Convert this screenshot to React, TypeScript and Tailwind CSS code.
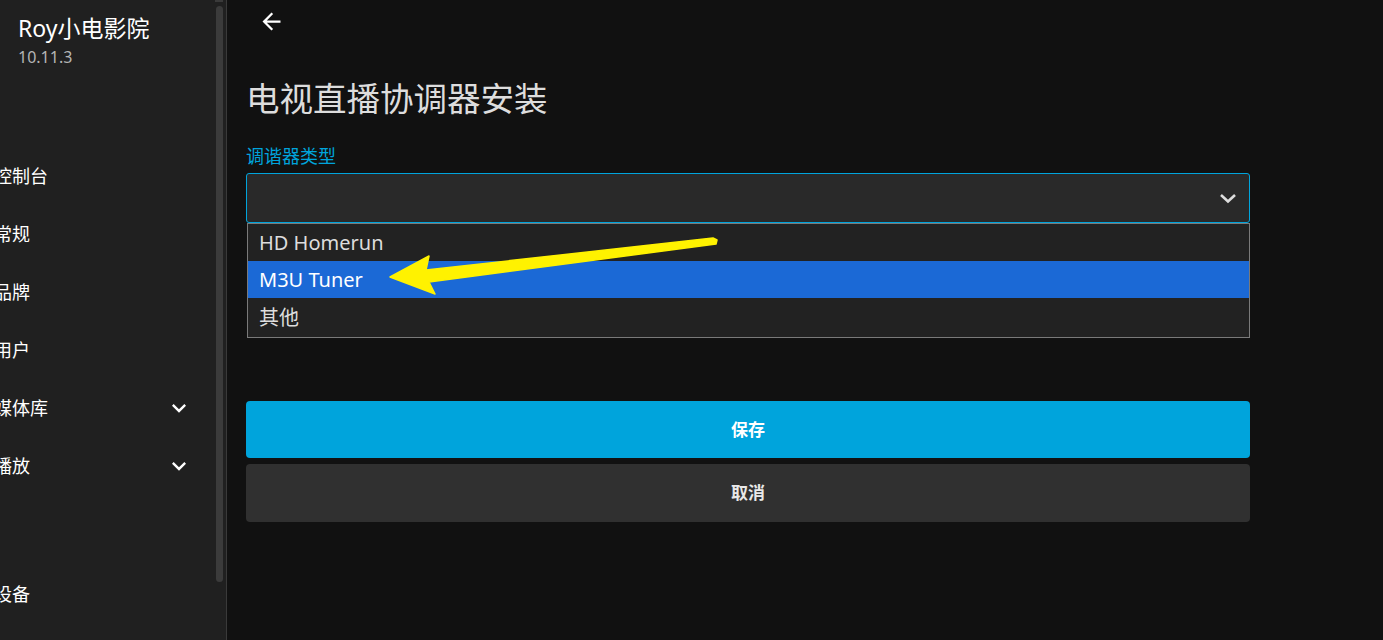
import React from 'react';

const font = { fontFamily: '"Noto Sans", "Noto Sans CJK SC", sans-serif' };

const navItems = [
  { label: '控制台' },
  { label: '常规' },
  { label: '品牌' },
  { label: '用户' },
  { label: '媒体库', chevron: true },
  { label: '播放', chevron: true },
];

function ExpandMore({ className }: { className?: string }) {
  return (
    <svg viewBox="0 0 24 24" className={className} fill="currentColor">
      <path d="M16.59 8.59L12 13.17 7.41 8.59 6 10l6 6 6-6z" />
    </svg>
  );
}

function Sidebar() {
  return (
    <aside className="relative w-[227px] shrink-0 h-[640px] bg-[#202020] border-r border-[#3a3a3a]">
      <div className="pl-[18px] pt-[12px]">
        <div className="text-[23px] leading-[32px] text-white">Roy小电影院</div>
        <div className="text-[16px] leading-[22px] text-[#b5b5b5] mt-[2px]">10.11.3</div>
      </div>
      <nav className="mt-[79px] pr-[33px]">
        {navItems.map((item) => (
          <div key={item.label} className="flex items-center justify-between h-[58px] -ml-[6px]">
            <span className="text-[18px] leading-[24px] text-white">{item.label}</span>
            {item.chevron && <ExpandMore className="w-[28px] h-[28px] text-white" />}
          </div>
        ))}
        <div className="h-[70px]" />
        <div className="flex items-center h-[58px] -ml-[6px]">
          <span className="text-[18px] leading-[24px] text-white">设备</span>
        </div>
      </nav>
      {/* scrollbar */}
      <div className="absolute left-[215px] top-0 w-[8px] h-[2px] bg-[#3a3a3a]" />
      <div className="absolute left-[216px] top-[6px] w-[7px] h-[576px] rounded-full bg-[#3b3b3b]" />
    </aside>
  );
}

function YellowArrow() {
  return (
    <svg className="absolute left-0 top-0 pointer-events-none" width="1383" height="640">
      <polygon
        points="390,277 429,256 426,270 713,238 717,240 716,244 429,282 435,294"
        fill="#fff200"
        stroke="#fff200"
        strokeWidth="1.5"
        strokeLinejoin="round"
      />
    </svg>
  );
}

export default function App() {
  return (
    <div className="relative flex w-[1383px] h-[640px] overflow-hidden bg-[#111111]" style={font}>
      <Sidebar />
      <main className="flex-1 pl-[19px]">
        <div className="h-[42px] flex items-center pl-[12px]">
          <svg viewBox="0 0 24 24" className="w-[27px] h-[27px] text-white" fill="currentColor">
            <path d="M20 11H7.83l5.59-5.59L12 4l-8 8 8 8 1.41-1.41L7.83 13H20v-2z" />
          </svg>
        </div>
        <h1 className="mt-[34px] text-[33.5px] leading-[44px] text-[#dddddd]">电视直播协调器安装</h1>
        <div className="w-[1004px] mt-[24px]">
          <label className="block text-[18px] leading-[24px] text-[#00a4dc]">调谐器类型</label>
          <div className="mt-[5px] h-[50px] bg-[#292929] border border-[#00a4dc] rounded-[3px] flex items-center justify-end pr-[12px]">
            <svg width="18" height="11" viewBox="0 0 18 11" className="text-[#dddddd]">
              <polyline points="2,2 9,8.5 16,2" fill="none" stroke="currentColor" strokeWidth="2.6" />
            </svg>
          </div>
          <div className="ml-[1px] bg-[#222222] border border-[#7a7a7a] text-[20px]">
            <div className="h-[37px] flex items-center pl-[11px] text-[#dddddd]">HD Homerun</div>
            <div className="h-[37px] flex items-center pl-[11px] text-white bg-[#1b69d6]">M3U Tuner</div>
            <div className="h-[39px] flex items-center pl-[11px] text-[#dddddd]">其他</div>
          </div>
          <button className="mt-[63px] w-full h-[57px] rounded-[4px] bg-[#00a4dc] text-white text-[17px] font-bold">
            保存
          </button>
          <button className="mt-[6px] w-full h-[58px] rounded-[4px] bg-[#303030] text-[#e8e8e8] text-[17px] font-bold">
            取消
          </button>
        </div>
      </main>
      <YellowArrow />
    </div>
  );
}
